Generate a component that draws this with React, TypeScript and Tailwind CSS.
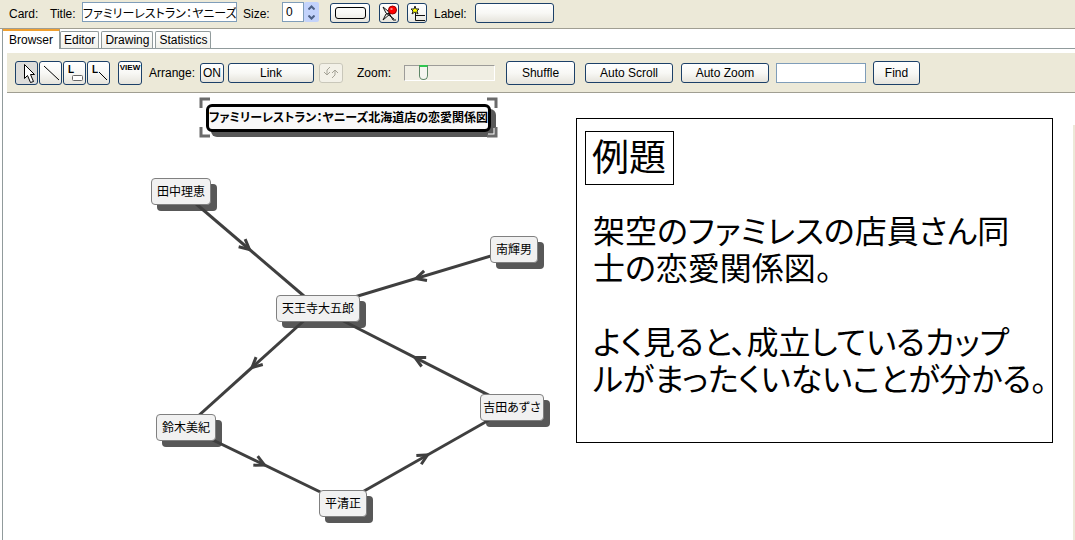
import { useState } from "react";
import type { ReactNode } from "react";
import clsx from "clsx";

interface CardNode {
    id: string;
    text: string;
    x: number;
    y: number;
    w: number;
}

const NODE_HEIGHT = 27;

// x and y are the centre of the card on the canvas
const nodes: CardNode[] = [
    { id: "tanaka", text: "田中理恵", x: 178, y: 98, w: 60 },
    { id: "minami", text: "南輝男", x: 511, y: 156, w: 48 },
    { id: "tennoji", text: "天王寺大五郎", x: 315, y: 215, w: 84 },
    { id: "yoshida", text: "吉田あずさ", x: 509, y: 314, w: 64 },
    { id: "suzuki", text: "鈴木美紀", x: 183, y: 334, w: 60 },
    { id: "taira", text: "平清正", x: 340, y: 410, w: 48 },
];

const links = [
    ["tanaka", "tennoji"],
    ["minami", "tennoji"],
    ["yoshida", "tennoji"],
    ["tennoji", "suzuki"],
    ["suzuki", "taira"],
    ["taira", "yoshida"],
];

const tabs = ["Browser", "Editor", "Drawing", "Statistics"];

function find(id: string) {
    return nodes.find((n) => n.id === id)!;
}

function Link({ from, to }: { from: CardNode; to: CardNode }) {
    const mx = (from.x + to.x) / 2;
    const my = (from.y + to.y) / 2;
    const angle =
        (Math.atan2(to.y - from.y, to.x - from.x) * 180) / Math.PI;

    return (
        <g fill="none" stroke="#3f3f3f" strokeWidth="3">
            <line x1={from.x} y1={from.y} x2={to.x} y2={to.y} />
            <path
                d="M-10 -5 L0 0 L-10 5"
                transform={`translate(${mx} ${my}) rotate(${angle})`}
            />
        </g>
    );
}

interface ButtonProps {
    label?: string;
    className?: string;
    disabled?: boolean;
    pressed?: boolean;
    children?: ReactNode;
}

function Button({
    label,
    className,
    disabled,
    pressed,
    children,
}: ButtonProps) {
    return (
        <button
            aria-label={label}
            aria-pressed={pressed}
            disabled={disabled}
            className={clsx(
                "flex shrink-0 items-center justify-center rounded-[3px] border whitespace-nowrap",
                disabled
                    ? "border-[#c9c7ba] bg-[#f3f1e8] text-[#a5a397]"
                    : "border-[#1c4068]",
                !disabled &&
                    (pressed
                        ? "bg-[#dcdcda]"
                        : "bg-linear-to-b from-white via-[#f8f8f5] to-[#e6e4dc]"),
                className
            )}
        >
            {children}
        </button>
    );
}

function CardBar() {
    return (
        <div className="flex h-[29px] items-start border-b border-[#a09e92] bg-[#ece9d8] pt-[2px] pl-[9px]">
            <span className="w-[41px] leading-6">Card:</span>
            <label htmlFor="title" className="w-8 leading-6">
                Title:
            </label>
            <input
                id="title"
                type="text"
                defaultValue="ファミリーレストラン：ヤニーズ"
                className="h-5 w-[155px] border border-[#7f9db9] bg-white focus:outline-0"
            />
            <label htmlFor="size" className="ml-[6px] w-[39px] leading-6">
                Size:
            </label>
            <input
                id="size"
                type="text"
                defaultValue="0"
                className="h-5 w-[22px] border border-[#7f9db9] bg-white px-[3px] focus:outline-0"
            />
            <div className="flex h-5 w-[15px] flex-col rounded-[2px] bg-[#c3d3fb]">
                <button
                    aria-label="Increase size"
                    className="flex h-[10px] items-center justify-center"
                >
                    <svg width="7" height="5" viewBox="0 0 7 5">
                        <path
                            d="M0.5 4.5 L3.5 1.5 L6.5 4.5"
                            fill="none"
                            stroke="#4d6185"
                            strokeWidth="2"
                        />
                    </svg>
                </button>
                <button
                    aria-label="Decrease size"
                    className="flex h-[10px] items-center justify-center"
                >
                    <svg width="7" height="5" viewBox="0 0 7 5">
                        <path
                            d="M0.5 0.5 L3.5 3.5 L6.5 0.5"
                            fill="none"
                            stroke="#4d6185"
                            strokeWidth="2"
                        />
                    </svg>
                </button>
            </div>
            <div className="flex items-start pt-px">
                <Button label="Shape" className="ml-[11px] h-5 w-10">
                    <span className="h-3 w-[31px] rounded-[3px] border border-black" />
                </Button>
                <Button label="Pin card" className="ml-[9px] h-5 w-5">
                    <svg width="18" height="18" viewBox="0 0 18 18">
                        <path
                            d="M3 3 L8 7 L13 16 L16 16 M3 16 L6 10 L11 9 M3 3 L6 9 L14 15 M3 16 L10 10"
                            fill="none"
                            stroke="#111"
                        />
                        <circle
                            cx="12.5"
                            cy="6"
                            r="4"
                            fill="#f00"
                            stroke="#900"
                        />
                        <path d="M10.500 5 h2" stroke="#fff" />
                    </svg>
                </Button>
                <Button label="Star label" className="ml-2 h-5 w-5">
                    <svg width="18" height="18" viewBox="0 0 18 18">
                        <path
                            d="M7 2 L8 5 L11 5 L9 7 L10 10 L7 8 L4 10 L5 7 L3 5 L6 5 Z"
                            fill="#ff0"
                            stroke="#222"
                        />
                        <path
                            d="M7.500 9 V16.500 H17 M7.500 11.500 H17"
                            fill="none"
                            stroke="#111"
                        />
                    </svg>
                </Button>
            </div>
            <span className="ml-[7px] w-[41px] leading-6">Label:</span>
            <Button label="Label" className="mt-px h-5 w-[79px]" />
        </div>
    );
}

function Toolbar() {
    return (
        <div className="mt-1 ml-1 flex h-10 items-center border-b border-[#a09e92] bg-[#ece9d8] pl-2">
            <div className="flex gap-px">
                <Button label="Select" pressed className="h-6 w-[23px]">
                    <svg width="21" height="22" viewBox="0 0 21 22">
                        <path
                            d="M8.500 2.500 V16.500 L11.500 13.500 L14.500 20.500 L17.500 19.500 L14.500 12.500 H18.500 Z"
                            fill="#fff"
                            stroke="#000"
                        />
                    </svg>
                </Button>
                <Button label="Draw link" className="h-6 w-[23px]">
                    <svg width="21" height="22" viewBox="0 0 21 22">
                        <path d="M4 4 L19 18" stroke="#000" />
                    </svg>
                </Button>
                <Button label="Card label" className="h-6 w-[23px]">
                    <svg width="21" height="22" viewBox="0 0 21 22">
                        <text x="4" y="11" fontSize="10" fontWeight="bold">
                            L
                        </text>
                        <rect
                            x="8.500"
                            y="13.500"
                            width="10"
                            height="5"
                            rx="1"
                            fill="#fff"
                            stroke="#666"
                        />
                    </svg>
                </Button>
                <Button label="Link label" className="h-6 w-[23px]">
                    <svg width="21" height="22" viewBox="0 0 21 22">
                        <text x="4" y="11" fontSize="10" fontWeight="bold">
                            L
                        </text>
                        <path d="M11 10 L19 18" stroke="#000" />
                    </svg>
                </Button>
            </div>
            <Button className="ml-2 h-6 w-6 items-start pt-px text-[8px] leading-[10px] font-bold">
                VIEW
            </Button>
            <span className="ml-[7px] w-[51px]">Arrange:</span>
            <Button className="h-5 w-6">ON</Button>
            <Button className="ml-1 h-5 w-[86px]">Link</Button>
            <Button label="Swap" disabled className="ml-[5px] h-5 w-6">
                <svg width="18" height="14" viewBox="0 0 18 14">
                    <path
                        d="M8 1 L5 4 V9 M2 6 L5 9 L8 6 M10 12 L13 9 V4 M10 7 L13 4 L16 7"
                        fill="none"
                        stroke="#a5a397"
                    />
                </svg>
            </Button>
            <label htmlFor="zoom" className="ml-[14px] w-[47px]">
                Zoom:
            </label>
            <input
                id="zoom"
                type="range"
                defaultValue="17"
                className="h-4 w-[91px] appearance-none border border-t-[#9d9c99] border-r-white border-b-white border-l-[#9d9c99] bg-[#f0eee3] [&::-webkit-slider-thumb]:h-[15px] [&::-webkit-slider-thumb]:w-[9px] [&::-webkit-slider-thumb]:appearance-none [&::-webkit-slider-thumb]:rounded-b-[5px] [&::-webkit-slider-thumb]:border [&::-webkit-slider-thumb]:border-t-2 [&::-webkit-slider-thumb]:border-[#5f8768] [&::-webkit-slider-thumb]:border-t-[#2fc64f] [&::-webkit-slider-thumb]:bg-[#f5f5f0]"
            />
            <Button className="ml-[11px] h-6 w-[69px]">Shuffle</Button>
            <Button className="ml-[10px] h-5 w-[88px]">Auto Scroll</Button>
            <Button className="ml-2 h-5 w-[88px]">Auto Zoom</Button>
            <input
                type="text"
                aria-label="Find text"
                className="ml-[7px] h-5 w-[90px] border border-[#7f9db9] bg-white px-1 focus:outline-0"
            />
            <Button className="ml-[7px] h-6 w-[47px]">Find</Button>
        </div>
    );
}

function Canvas() {
    return (
        <div className="relative min-h-[440px] grow overflow-hidden bg-white">
            {nodes.map((n) => (
                <div
                    key={n.id}
                    className="absolute rounded-[4px] bg-[#585858]"
                    style={{
                        left: n.x - n.w / 2 + 6,
                        top: n.y - 13 + 6,
                        width: n.w,
                        height: NODE_HEIGHT,
                    }}
                />
            ))}
            <svg className="absolute top-0 left-0" width="600" height="440">
                {links.map(([from, to]) => (
                    <Link key={from + to} from={find(from)} to={find(to)} />
                ))}
            </svg>
            {nodes.map((n) => (
                <div
                    key={n.id}
                    className="absolute flex items-center justify-center rounded-[4px] border border-[#808080] bg-[#f1f1f1] whitespace-nowrap"
                    style={{
                        left: n.x - n.w / 2,
                        top: n.y - 13,
                        width: n.w,
                        height: NODE_HEIGHT,
                    }}
                >
                    {n.text}
                </div>
            ))}
            <div className="absolute top-[11px] left-[203px] flex h-7 w-[285px] items-center justify-center rounded-[6px] border-3 border-black bg-[#f8f8f8] font-bold whitespace-nowrap shadow-[5px_5px_0_#585858]">
                ファミリーレストラン：ヤニーズ北海道店の恋愛関係図
            </div>
            {/* selection marks around the current card */}
            <svg
                className="absolute top-1 left-[196px]"
                width="300"
                height="42"
                fill="none"
            >
                <path
                    d="M2 10 V2 H10 M289 2 H297 V10 M297 31 V39 H289 M10 39 H2 V31"
                    stroke="#fff"
                    strokeWidth="5"
                />
                <path
                    d="M2 11 V2 H11 M288 2 H297 V11 M297 30 V39 H288 M11 39 H2 V30"
                    stroke="#6b6b6b"
                    strokeWidth="3"
                />
            </svg>
            <div className="absolute top-[25px] left-[573px] h-[325px] w-[477px] border border-black pt-3 pl-2 text-[32px] leading-[37px] whitespace-nowrap">
                <h1 className="h-[54px] w-[89px] border border-black pt-2 pl-[6px] text-[37px]">
                    例題
                </h1>
                <p className="mt-[29px] pl-2">
                    架空のファミレスの店員さん同
                    <br />
                    士の恋愛関係図。
                </p>
                <p className="mt-[37px] pl-2">
                    よく見ると、成立しているカップ
                    <br />
                    ルがまったくいないことが分かる。
                </p>
            </div>
        </div>
    );
}

export default function App() {
    const [tab, setTab] = useState("Browser");

    return (
        <div className="flex min-h-screen flex-col bg-white font-['Liberation_Sans','Noto_Sans_CJK_JP',sans-serif] text-[12px] leading-4 text-black [font-feature-settings:'palt']">
            <CardBar />
            <div className="ml-[2px] flex grow flex-col border-l border-[#919b9c]">
                <div className="flex h-5 items-end border-b border-[#919b9c]">
                    {tabs.map((name) => (
                        <button
                            key={name}
                            onClick={() => setTab(name)}
                            className={clsx(
                                "border-[#919b9c]",
                                tab === name
                                    ? "-mb-px h-5 border-t-2 border-r border-t-[#f0a030] bg-white px-[6px] pb-px"
                                    : "mr-[2px] h-[17px] rounded-t-[2px] border border-b-0 bg-linear-to-b from-white to-[#f0f0ea] px-[3px]"
                            )}
                        >
                            {name}
                        </button>
                    ))}
                </div>
                <Toolbar />
                <div className="flex grow">
                    <Canvas />
                    <div className="mt-8 w-[2px] bg-[#ece9d8]" />
                </div>
            </div>
        </div>
    );
}
